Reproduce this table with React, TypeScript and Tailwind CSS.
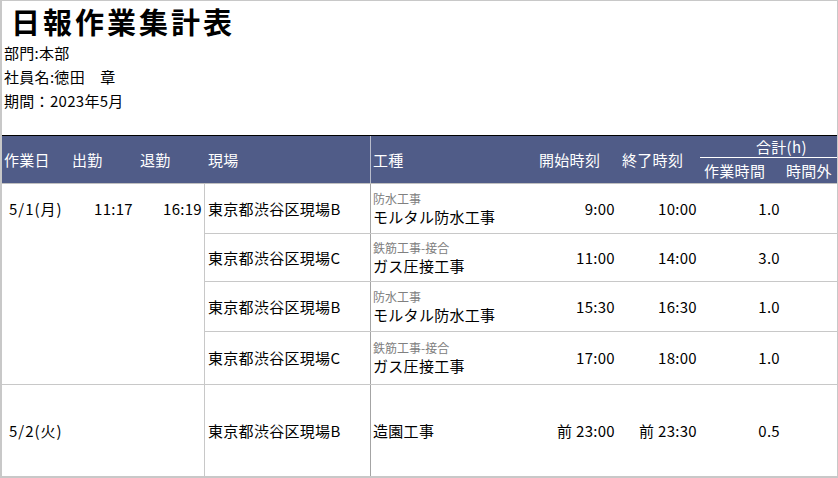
type Work = {
  site: string;
  category?: string;
  name: string;
  start: string;
  end: string;
  hours: string;
  rowClass: string;
};

type Day = {
  date: string;
  clockIn: string;
  clockOut: string;
  headClass: string;
  works: Work[];
};

const DAYS: Day[] = [
  {
    date: '5/1(月)',
    clockIn: '11:17',
    clockOut: '16:19',
    headClass: 'h-[49px]',
    works: [
      { site: '東京都渋谷区現場B', category: '防水工事', name: 'モルタル防水工事', start: '9:00', end: '10:00', hours: '1.0', rowClass: 'h-[50px] border-b' },
      { site: '東京都渋谷区現場C', category: '鉄筋工事-接合', name: 'ガス圧接工事', start: '11:00', end: '14:00', hours: '3.0', rowClass: 'h-[48px] border-b' },
      { site: '東京都渋谷区現場B', category: '防水工事', name: 'モルタル防水工事', start: '15:30', end: '16:30', hours: '1.0', rowClass: 'h-[50px] border-b' },
      { site: '東京都渋谷区現場C', category: '鉄筋工事-接合', name: 'ガス圧接工事', start: '17:00', end: '18:00', hours: '1.0', rowClass: 'h-[52px]' },
    ],
  },
  {
    date: '5/2(火)',
    clockIn: '',
    clockOut: '',
    headClass: 'h-full',
    works: [
      { site: '東京都渋谷区現場B', name: '造園工事', start: '前 23:00', end: '前 23:30', hours: '0.5', rowClass: 'h-[91px]' },
    ],
  },
];

function WorkRow({ work }: { work: Work }) {
  return (
    <div className={`flex items-center border-[#c8c8c8] ${work.rowClass}`}>
      <div className="w-[166px] h-full flex items-center pl-[3px] border-r border-[#a4a4a4]">{work.site}</div>
      <div className="w-[164px] pl-[2px] flex flex-col">
        {work.category && (
          <span className="text-[12px] leading-[16px] tracking-[0px] text-[#808080]">{work.category}</span>
        )}
        <span className="leading-[20px]">{work.name}</span>
      </div>
      <div className="w-[83px] pr-[3px] text-right">{work.start}</div>
      <div className="w-[82px] pr-[3px] text-right">{work.end}</div>
      <div className="w-[82px] pr-[2px] text-right">{work.hours}</div>
      <div className="flex-1" />
    </div>
  );
}

function DayGroup({ day, last }: { day: Day; last: boolean }) {
  return (
    <div className={`flex ${last ? 'flex-1' : 'border-b border-[#c8c8c8]'}`}>
      <div className="w-[203px] border-r border-[#c8c8c8]">
        <div className={`flex items-center ${day.headClass}`}>
          <div className="w-[66px] pl-[7px] tracking-[1px]">{day.date}</div>
          <div className="w-[68px] pr-[3px] text-right">{day.clockIn}</div>
          <div className="w-[67px] pr-[1px] text-right">{day.clockOut}</div>
        </div>
      </div>
      <div className="flex-1 flex flex-col">
        {day.works.map((w, i) => (
          <WorkRow key={i} work={w} />
        ))}
      </div>
    </div>
  );
}

export default function App() {
  return (
    <div className="w-[838px] h-[478px] bg-white border border-l-2 border-b-2 border-[#c8c8c8] flex flex-col text-[15px] leading-[20px] tracking-[0.3px] text-black font-['Noto_Sans_CJK_JP','Noto_Sans',sans-serif] overflow-hidden">
      <div className="h-[135px] pl-[2px]">
        <h1 className="h-[40px] pl-[7px] text-[29px] leading-[40px] font-bold tracking-[3px]">日報作業集計表</h1>
        <p className="h-[24px] leading-[24px]">部門:本部</p>
        <p className="h-[24px] leading-[24px]">社員名:徳田　章</p>
        <p className="h-[24px] leading-[24px]">期間：2023年5月</p>
      </div>

      <div className="h-[49px] flex border-t border-t-black border-b border-b-[#c0c0c0] bg-[#505c88] text-white">
        <div className="w-[66px] pl-[2px] flex items-center">作業日</div>
        <div className="w-[68px] pl-[4px] flex items-center">出勤</div>
        <div className="w-[68px] pl-[4px] flex items-center">退勤</div>
        <div className="w-[167px] pl-[4px] flex items-center border-r border-[#b8bccb]">現場</div>
        <div className="w-[164px] pl-[2px] flex items-center">工種</div>
        <div className="w-[83px] pl-[4px] flex items-center">開始時刻</div>
        <div className="w-[82px] pl-[4px] flex items-center">終了時刻</div>
        <div className="flex-1 flex flex-col">
          <div className="h-[22px] border-b border-white pl-[56px] flex items-center">合計(h)</div>
          <div className="flex-1 flex items-center">
            <div className="w-[82px] pl-[4px]">作業時間</div>
            <div className="pl-[4px]">時間外</div>
          </div>
        </div>
      </div>

      <div className="flex-1 flex flex-col">
        {DAYS.map((d, i) => (
          <DayGroup key={d.date} day={d} last={i === DAYS.length - 1} />
        ))}
      </div>
    </div>
  );
}
